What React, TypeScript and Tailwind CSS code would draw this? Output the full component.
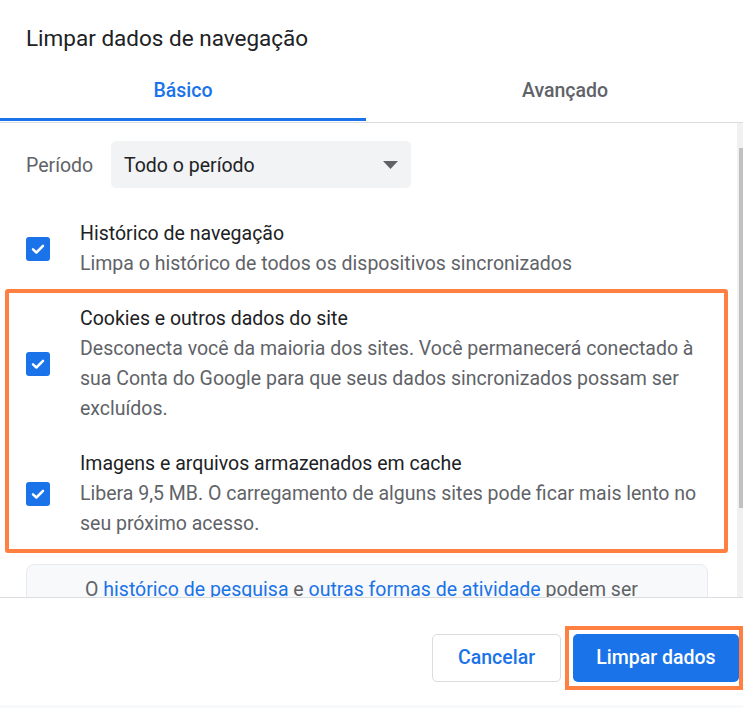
import React from 'react';

const font = { fontFamily: 'Roboto, "Liberation Sans", sans-serif' };

function CheckBox() {
  return (
    <div className="w-[24px] h-[24px] rounded-[3px] bg-[#1a73e8] flex items-center justify-center flex-shrink-0">
      <svg width="16" height="16" viewBox="0 0 16 16" fill="none">
        <path d="M3 8.3 L6.4 11.5 L13 4.8" stroke="#fff" strokeWidth="2.5" strokeLinecap="round" strokeLinejoin="round" />
      </svg>
    </div>
  );
}

function Item({ title, desc }: { title: string; desc: string }) {
  return (
    <div className="flex items-center gap-[30px]">
      <CheckBox />
      <div className="flex-1 text-[19.5px] leading-[30px]">
        <div className="text-[#202124]">{title}</div>
        <div className="text-[#5f6368]">{desc}</div>
      </div>
    </div>
  );
}

export default function App() {
  return (
    <div className="w-[743px] h-[708px] bg-white flex flex-col overflow-hidden" style={font}>
      {/* Title */}
      <div className="pt-[24px] pl-[26px] text-[22.5px] leading-[28px] text-[#202124]">
        Limpar dados de navegação
      </div>

      {/* Tabs */}
      <div className="mt-[10px] flex pb-[1px] border-b border-[#dadce0]">
        <div className="w-[366px] h-[59px] flex items-center justify-center pt-[2px] border-b-[3px] border-[#1a73e8] text-[19.5px] font-medium text-[#1a73e8]">
          Básico
        </div>
        <div className="flex-1 h-[59px] flex items-center justify-center pl-[21px] pt-[2px] pb-[3px] text-[19.5px] font-medium text-[#5f6368]">
          Avançado
        </div>
      </div>

      {/* Body */}
      <div className="flex-1 flex min-h-0">
        <div className="flex-1 overflow-hidden pl-[26px] pr-[29px] pt-[18px]">
          <div className="flex items-center">
            <span className="w-[85px] pt-[2px] text-[19.5px] text-[#5f6368]">Período</span>
            <div className="w-[300px] h-[47px] rounded-[5px] bg-[#f1f3f4] flex items-center justify-between pl-[13px] pr-[13px]">
              <span className="pt-[2px] text-[19.5px] text-[#202124]">Todo o período</span>
              <svg width="15" height="8" viewBox="0 0 15 8">
                <path d="M0 0 H15 L7.5 8 Z" fill="#5f6368" />
              </svg>
            </div>
          </div>

          <div className="mt-[31px]">
            <Item
              title="Histórico de navegação"
              desc="Limpa o histórico de todos os dispositivos sincronizados"
            />
          </div>

          <div className="mt-[10px] ml-[-21px] mr-[-20px] border-4 border-[#ff8040] rounded-[3px] pl-[17px] pr-[16px] pt-[11px] pb-[10px] flex flex-col gap-[25px]">
            <Item
              title="Cookies e outros dados do site"
              desc="Desconecta você da maioria dos sites. Você permanecerá conectado à sua Conta do Google para que seus dados sincronizados possam ser excluídos."
            />
            <Item
              title="Imagens e arquivos armazenados em cache"
              desc="Libera 9,5 MB. O carregamento de alguns sites pode ficar mais lento no seu próximo acesso."
            />
          </div>

          <div className="mt-[11px] h-[60px] rounded-[8px] border border-[#e8eaed] bg-[#f8f9fa] pt-[10px] pl-[14px] pr-[25px] text-center text-[19.5px] leading-[30px] text-[#5f6368]">
            O <span className="text-[#1a73e8]">histórico de pesquisa</span> e{' '}
            <span className="text-[#1a73e8]">outras formas de atividade</span> podem ser
          </div>
        </div>

        {/* Scrollbar */}
        <div className="w-[6px] bg-[#f1f1f1] pt-[25px]">
          <div className="ml-[2px] w-[4px] h-[360px] bg-[#c1c1c1]" />
        </div>
      </div>

      {/* Footer */}
      <div className="h-[111px] border-t border-[#dadce0] flex flex-col">
        <div className="flex-1 flex justify-end items-start pt-[28px]">
          <button className="mt-[8px] mr-[4px] w-[129px] h-[48px] rounded-[5px] border border-[#dadce0] bg-white text-[19.5px] font-medium text-[#1a73e8]">
            Cancelar
          </button>
          <div className="border-4 border-[#ff8040] pl-[4px] pt-[4px] pb-[4px]">
            <button className="w-[166px] h-[48px] rounded-[5px] bg-[#1a73e8] text-[19.5px] font-medium text-white">
              Limpar dados
            </button>
          </div>
        </div>
        <div className="h-[3px] bg-[#f8f9fa]" />
      </div>
    </div>
  );
}
